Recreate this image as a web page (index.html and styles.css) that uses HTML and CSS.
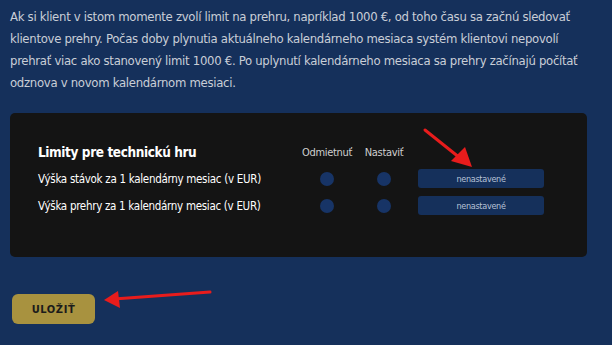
FILE: index.html
```html
<!DOCTYPE html>
<html lang="sk">
<head>
<meta charset="utf-8">
<link rel="stylesheet" href="styles.css">
</head>
<body>
<div class="page">
  <p class="intro">Ak si klient v istom momente zvolí limit na prehru, napríklad 1000 €, od toho času sa začnú sledovať klientove prehry. Počas doby plynutia aktuálneho kalendárneho mesiaca systém klientovi nepovolí prehrať viac ako stanovený limit 1000 €. Po uplynutí kalendárneho mesiaca sa prehry začínajú počítať odznova v novom kalendárnom mesiaci.</p>

  <div class="panel">
    <div class="grid">
      <div class="title">Limity pre technickú hru</div>
      <div class="head">Odmietnuť</div>
      <div class="head">Nastaviť</div>
      <div></div>

      <div class="label">Výška stávok za 1 kalendárny mesiac (v EUR)</div>
      <div class="cell"><span class="dot"></span></div>
      <div class="cell"><span class="dot"></span></div>
      <div class="cell end"><span class="state">nenastavené</span></div>

      <div class="label">Výška prehry za 1 kalendárny mesiac (v EUR)</div>
      <div class="cell"><span class="dot"></span></div>
      <div class="cell"><span class="dot"></span></div>
      <div class="cell end"><span class="state">nenastavené</span></div>
    </div>
  </div>

  <button class="save">ULOŽIŤ</button>

  <svg class="arrows" width="612" height="345" viewBox="0 0 612 345">
    <line x1="425" y1="130" x2="460" y2="158" stroke="#e81c1c" stroke-width="3" stroke-linecap="round"/>
    <polygon points="472,167 451,161 465,147" fill="#e81c1c"/>
    <line x1="210" y1="292" x2="114" y2="299" stroke="#e81c1c" stroke-width="3" stroke-linecap="round"/>
    <polygon points="104,300 118,291 120,308" fill="#e81c1c"/>
  </svg>
</div>
</body>
</html>
```

FILE: styles.css
```css
html, body {
  margin: 0;
  padding: 0;
}
body {
  background: #15305b;
  font-family: "DejaVu Sans Condensed", "Liberation Sans", sans-serif;
  width: 612px;
  height: 345px;
  overflow: hidden;
}
.page {
  position: relative;
  display: flex;
  flex-direction: column;
  align-items: flex-start;
  padding-top: 6px;
}
.intro {
  margin: 0 0 0 10px;
  width: 580px;
  color: #c9ced7;
  font-size: 13px;
  letter-spacing: -0.3px;
  line-height: 22px;
}
.panel {
  margin: 19px 0 0 10px;
  width: 577px;
  height: 144px;
  box-sizing: border-box;
  background: #141414;
  border-radius: 5px;
  padding: 30px 0 0 28px;
}
.grid {
  display: grid;
  grid-template-columns: 262px 54px 60px 130px;
  grid-template-rows: 18px 19px 19px;
  row-gap: 8px;
  align-items: center;
}
.title {
  color: #ffffff;
  font-weight: bold;
  font-size: 13.5px;
  letter-spacing: -0.4px;
}
.head {
  color: #cfcfcf;
  font-size: 11px;
  letter-spacing: -0.3px;
  text-align: center;
}
.label {
  color: #ffffff;
  font-size: 11.5px;
  letter-spacing: -0.3px;
}
.cell {
  display: flex;
  justify-content: center;
  align-items: center;
  height: 19px;
}
.cell.end {
  justify-content: flex-end;
}
.dot {
  width: 14px;
  height: 14px;
  border-radius: 50%;
  background: #173466;
}
.state {
  width: 126px;
  height: 19px;
  background: #15305b;
  border-radius: 3px;
  color: #b7c2d6;
  font-size: 9px;
  letter-spacing: -0.3px;
  display: flex;
  align-items: center;
  justify-content: center;
}
.save {
  margin: 37px 0 0 12px;
  width: 83px;
  height: 30px;
  border: none;
  border-radius: 6px;
  background: #a8923f;
  color: #1b1b1b;
  font-family: "DejaVu Sans Condensed", sans-serif;
  font-weight: bold;
  font-size: 11px;
  letter-spacing: 0.6px;
  padding: 0;
}
.arrows {
  position: absolute;
  left: 0;
  top: 0;
  pointer-events: none;
}
```
